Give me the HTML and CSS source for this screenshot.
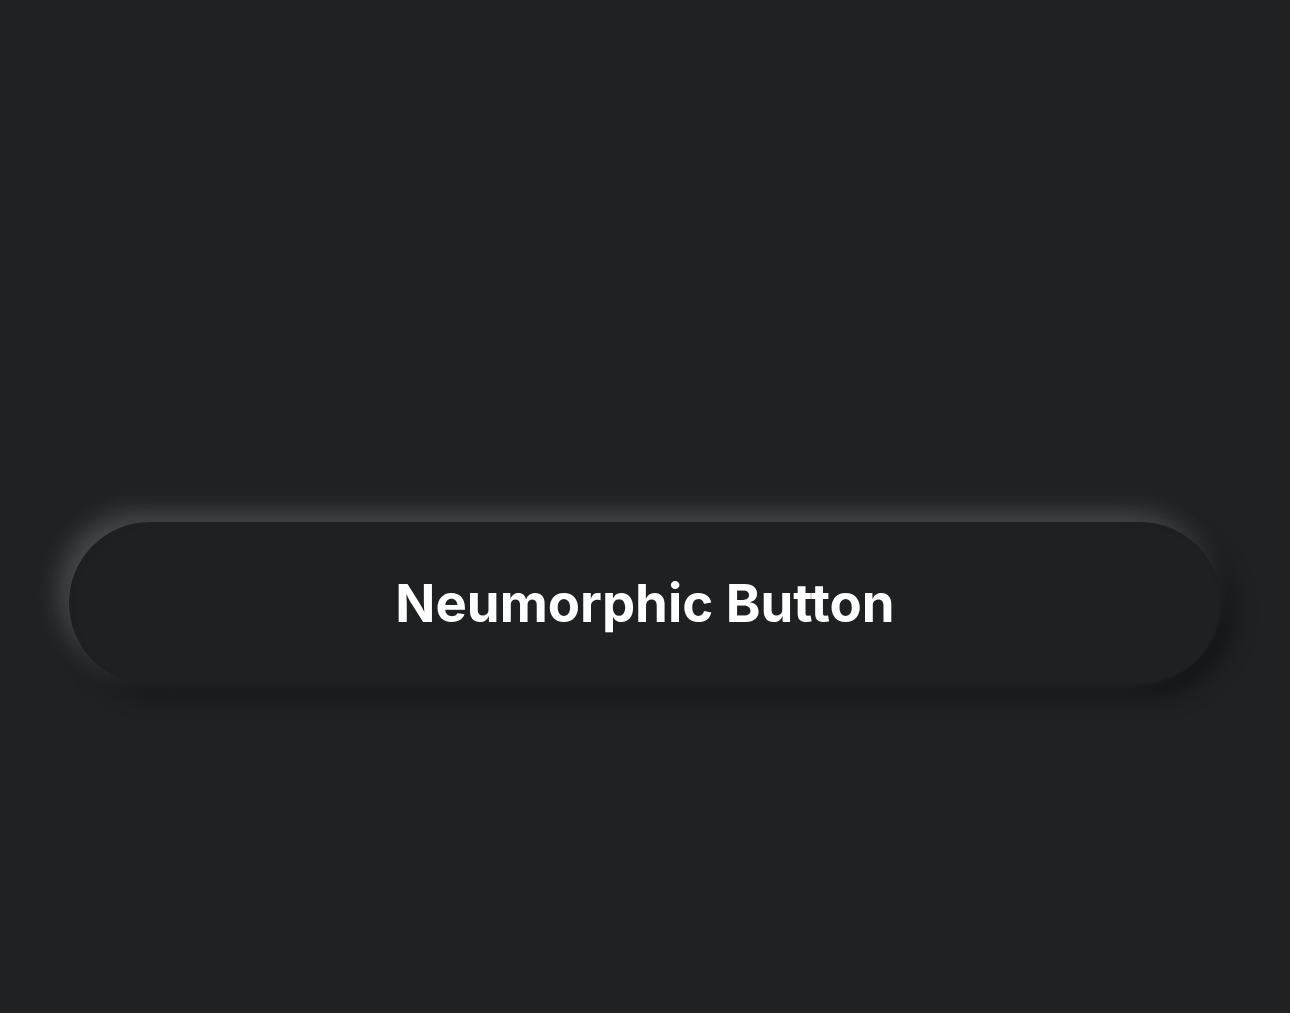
FILE: index.html
```html
<!DOCTYPE html>
<html lang="en">
<head>
<meta charset="utf-8">
<title>Neumorphic Button</title>
<link rel="stylesheet" href="styles.css">
</head>
<body>
<main class="stage">
  <button class="neu-btn" type="button">Neumorphic Button</button>
</main>
</body>
</html>
```
FILE: styles.css
```css
* { box-sizing: border-box; }
html, body {
  margin: 0;
  padding: 0;
  background: #202123;
}
.stage {
  height: 1013px;
  display: flex;
  align-items: center;
  justify-content: center;
  padding: 192px 69px 0;
}
.neu-btn {
  width: 100%;
  height: 162px;
  border: none;
  border-radius: 81px;
  background: #1f2022;
  color: #ffffff;
  font-family: Inter, "Noto Sans", sans-serif;
  font-weight: 700;
  font-size: 52.7px;
  letter-spacing: 0;
  box-shadow: -10px -10px 26px rgba(255, 255, 255, 0.19),
              10px 10px 26px rgba(0, 0, 0, 0.45),
              inset 2px 2px 6px rgba(0, 0, 0, 0.05);
  cursor: pointer;
}
```
